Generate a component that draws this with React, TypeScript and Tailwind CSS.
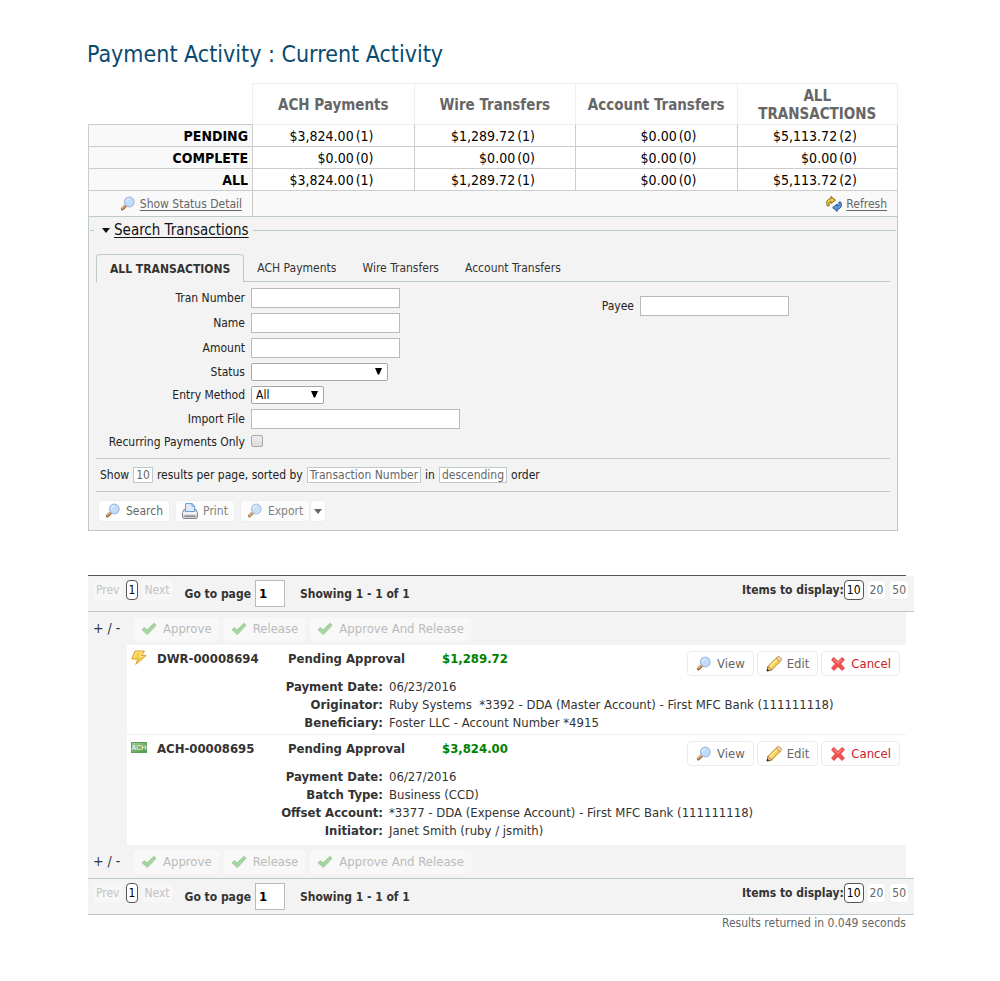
import { useState, type ReactNode } from "react";

interface SummaryRow {
  label: string;
  cells: [string, string][];
}

interface Payment {
  id: string;
  type: "wire" | "ach";
  status: string;
  amount: string;
  details: [string, string][];
}

const columns = ["ACH Payments", "Wire Transfers", "Account Transfers", "ALL TRANSACTIONS"];

const summary: SummaryRow[] = [
  { label: "PENDING", cells: [["$3,824.00", "(1)"], ["$1,289.72", "(1)"], ["$0.00", "(0)"], ["$5,113.72", "(2)"]] },
  { label: "COMPLETE", cells: [["$0.00", "(0)"], ["$0.00", "(0)"], ["$0.00", "(0)"], ["$0.00", "(0)"]] },
  { label: "ALL", cells: [["$3,824.00", "(1)"], ["$1,289.72", "(1)"], ["$0.00", "(0)"], ["$5,113.72", "(2)"]] },
];

const payments: Payment[] = [
  {
    id: "DWR-00008694",
    type: "wire",
    status: "Pending Approval",
    amount: "$1,289.72",
    details: [
      ["Payment Date:", "06/23/2016"],
      ["Originator:", "Ruby Systems \u00a0*3392 - DDA (Master Account) - First MFC Bank (111111118)"],
      ["Beneficiary:", "Foster LLC - Account Number *4915"],
    ],
  },
  {
    id: "ACH-00008695",
    type: "ach",
    status: "Pending Approval",
    amount: "$3,824.00",
    details: [
      ["Payment Date:", "06/27/2016"],
      ["Batch Type:", "Business (CCD)"],
      ["Offset Account:", "*3377 - DDA (Expense Account) - First MFC Bank (111111118)"],
      ["Initiator:", "Janet Smith (ruby / jsmith)"],
    ],
  },
];

const tabs = ["ALL TRANSACTIONS", "ACH Payments", "Wire Transfers", "Account Transfers"];

/* ---------- icons ---------- */

function SearchIcon() {
  return (
    <svg width="16" height="16" viewBox="0 0 16 16" className="shrink-0" aria-hidden="true">
      <path d="M2.4 12.9 5.6 9.8" stroke="#94683c" strokeWidth="3" strokeLinecap="round" />
      <path d="M2.4 12.3 5.4 9.5" stroke="#e9b06a" strokeWidth="1.5" strokeLinecap="round" />
      <circle cx="9.3" cy="6" r="4.8" fill="#bfdcfa" stroke="#a3b9e4" strokeWidth="1.2" />
      <path d="M6.3 5.8a3 3 0 0 1 3.4-2.8" stroke="#e3f0ff" strokeWidth="1.3" fill="none" />
    </svg>
  );
}

function RefreshIcon() {
  return (
    <svg width="16" height="16" viewBox="0 0 16 16" className="shrink-0" aria-hidden="true">
      <path d="M1.4 10C-.4 6.400 1 2.900 4.900 2.600V.5l4.500 3.600-4.500 3.500V5.500C3.200 5.700 2.500 7.300 3.300 9.700z" fill="#f0cf3c" stroke="#75590f" strokeWidth=".9" />
      <path d="M14.600 6c1.800 3.600.4 6.900-3.400 7.200v2.200l-4.500-3.800 4.500-3.600v2.100c1.800-.1 2.400-1.600 1.600-3.900z" fill="#5d9be0" stroke="#153f7c" strokeWidth=".9" />
    </svg>
  );
}

function PrintIcon() {
  return (
    <svg width="16" height="16" viewBox="0 0 16 16" className="shrink-0" aria-hidden="true">
      <path d="M2 6.5h12l1.5 3.5v4l-1 1.5h-13l-1-1.5v-4z" fill="#c9cbd0" stroke="#686b71" />
      <path d="M3.5 8.5V.6h6.7l2.3 2.3v5.6z" fill="#dcebfc" stroke="#4f86c9" />
      <path d="M10 .8v2.4h2.4" fill="none" stroke="#4f86c9" />
      <path d="M1 9h14v2.5H1z" fill="#f4f4f6" />
      <path d="M2.5 12.5h11v1.3h-11z" fill="#63656a" />
    </svg>
  );
}

function CheckIcon() {
  return (
    <svg width="16" height="16" viewBox="0 0 16 16" className="shrink-0" aria-hidden="true">
      <path d="M1 8.8 3.3 6.6 6 8.9 12.9 2.3 15.1 4.2 6.4 13.6z" fill="#a5d6a1" stroke="#94c991" strokeWidth=".8" />
    </svg>
  );
}

function PencilIcon() {
  return (
    <svg width="16" height="16" viewBox="0 0 16 16" className="shrink-0" aria-hidden="true">
      <path d="M1 15 1.9 10.4 10.3 2 14 5.7 5.6 14.1z" fill="#f6d04e" stroke="#b5822b" strokeWidth=".9" />
      <path d="M3.6 11 11.2 3.5" stroke="#fdf0a4" strokeWidth="1.6" />
      <path d="M10.3 2 11.7.8c1.4-1 4.5 2 3.5 3.5L14 5.7z" fill="#f3dcc0" stroke="#b5822b" strokeWidth=".9" />
      <path d="M1 15 1.9 10.4 5.6 14.1z" fill="#f3cfa0" stroke="#8a5a20" strokeWidth=".7" />
      <path d="M.8 15.2 1.4 12.7l2 1.9z" fill="#222" />
    </svg>
  );
}

function CancelIcon() {
  return (
    <svg width="16" height="16" viewBox="0 0 16 16" className="shrink-0" aria-hidden="true">
      <path
        d="M1.6 3.7 3.9 1.5 8 5.5 12.1 1.5 14.4 3.7 10.6 7.9 14.4 12.1 12.1 14.4 8 10.4 3.9 14.4 1.6 12.1 5.4 7.9z"
        fill="#f4534f"
        stroke="#dd3a3d"
        strokeWidth=".9"
      />
      <path d="M3.9 3.3 8 7.2l4.1-3.9" fill="none" stroke="#fa8a80" strokeWidth="1.1" />
    </svg>
  );
}

function WireIcon() {
  return (
    <svg width="16" height="16" viewBox="0 0 16 16" className="shrink-0" aria-hidden="true">
      <path d="M4 1h9.5L10.6 5.5h4.6L4.7 14.4 7 9H.8z" fill="#f7cf45" stroke="#dd9f33" />
      <path d="M3 8 5 2.3h6.2L8.6 6.6h3" fill="none" stroke="#fdeb9a" />
    </svg>
  );
}

function AchIcon() {
  return (
    <svg width="16" height="16" viewBox="0 0 16 16" className="shrink-0" aria-hidden="true">
      <defs>
        <linearGradient id="ach-fill" x1="0" y1="0" x2="1" y2="1">
          <stop offset="0" stopColor="#a0cf97" />
          <stop offset="1" stopColor="#4d9447" />
        </linearGradient>
      </defs>
      <rect x=".5" y="2.5" width="15" height="10" fill="url(#ach-fill)" stroke="#5f9f5a" />
      <text x="8" y="10" textAnchor="middle" fontSize="7" fill="#fff" fontFamily="Liberation Sans, sans-serif" fontWeight="400">
        ACH
      </text>
    </svg>
  );
}

function Caret() {
  return (
    <svg width="8" height="5" viewBox="0 0 8 5" className="shrink-0" aria-hidden="true">
      <path d="M0 0h8L4 5z" fill="currentColor" />
    </svg>
  );
}

/* ---------- summary ---------- */

function SummaryTable() {
  return (
    <table className="w-full table-fixed border-separate border-spacing-0 text-[14px] leading-[18px]">
      <colgroup>
        <col className="w-[164px]" />
        <col />
        <col />
        <col />
        <col />
      </colgroup>
      <thead>
        <tr>
          <td />
          {columns.map((name) => (
            <th
              key={name}
              scope="col"
              className="h-[41px] border-t border-l border-[#eee] px-2 pt-0.5 pb-0 text-[15px] font-bold text-[#666] last:border-r"
            >
              {name}
            </th>
          ))}
        </tr>
      </thead>
      <tbody>
        {summary.map((row, i) => (
          <tr key={row.label}>
            <th
              scope="row"
              className="h-[22px] border-t border-l border-[#ccc] bg-[#f9f9f9] py-0 pr-1 text-right font-bold text-black"
            >
              {row.label}
            </th>
            {row.cells.map(([amount, count], j) => (
              <td
                key={j}
                className={`border-t border-l border-[#ccc] py-0 pr-10 text-right text-black last:border-r ${i === 0 ? "border-t-[#eee]" : ""}`}
              >
                {amount}
                <span className="ml-0.5">{count}</span>
              </td>
            ))}
          </tr>
        ))}
        <tr className="text-[12px] text-[#666]">
          <td className="h-[26px] border-t border-l border-[#ccc] bg-[#f9f9f9] py-0 pr-2.5">
            <a href="#detail" className="flex items-center justify-end gap-1 underline underline-offset-2">
              <SearchIcon />
              Show Status Detail
            </a>
          </td>
          <td colSpan={4} className="border-x border-t border-[#ccc] bg-[#f9f9f9] py-0 pr-2.5">
            <a href="#refresh" className="flex items-center justify-end gap-1 underline underline-offset-2">
              <RefreshIcon />
              Refresh
            </a>
          </td>
        </tr>
      </tbody>
    </table>
  );
}

/* ---------- search form ---------- */

function Field({ id, label, labelWidth, children }: { id: string; label: string; labelWidth: string; children: ReactNode }) {
  return (
    <div className="flex items-center gap-1.5">
      <label htmlFor={id} className={`${labelWidth} text-right`}>
        {label}
      </label>
      {children}
    </div>
  );
}

function SelectBox({ id, width, options }: { id: string; width: string; options: string[] }) {
  return (
    <div className="relative">
      <select
        id={id}
        className={`${width} block h-[18px] appearance-none rounded-xs border border-[#a5a5a5] bg-white pl-1 text-[12px] leading-4 text-black`}
      >
        {options.map((o) => (
          <option key={o}>{o}</option>
        ))}
      </select>
      <svg width="7" height="7" viewBox="0 0 7 7" className="pointer-events-none absolute top-[5px] right-1.5 text-black" aria-hidden="true">
        <path d="M0 0h7L4.200 6.500H2.800z" fill="currentColor" />
      </svg>
    </div>
  );
}

const textBox = "h-5 border border-[#b9b9b9] bg-white px-1 text-[12px] text-black";
const formButton = "flex h-[22px] items-center gap-[5px] rounded border border-[#efefef] bg-white px-1.5 text-[#666]";
const choice = "mx-1 border border-[#bccaca] bg-white px-0.5 leading-[14px] text-[#666]";

function SearchForm() {
  const [activeTab, setActiveTab] = useState(tabs[0]);
  return (
    <form
      className="border border-[#bccaca] bg-[#f3f3f3] text-[12px] leading-4 text-[#222]"
      onSubmit={(e) => e.preventDefault()}
    >
      <fieldset className="mx-px mt-1 border-t border-[#bccaca] pb-2">
        <legend className="ml-1 flex items-center gap-1 pr-1 pl-2 text-[15px] leading-[18px] text-[#111]">
          <Caret />
          <a href="#search" className="underline underline-offset-2">
            Search Transactions
          </a>
        </legend>
        <div className="px-1.5 pt-[14px]">
          <div role="tablist" className="flex items-end border-b border-[#bccaca]">
            {tabs.map((tab) => (
              <button
                key={tab}
                type="button"
                role="tab"
                aria-selected={tab === activeTab}
                onClick={() => setActiveTab(tab)}
                className={
                  tab === activeTab
                    ? "-mb-px h-7 rounded-t border border-b-0 border-[#bccaca] bg-[#f3f3f3] px-[13px] font-bold text-[#333]"
                    : "h-7 px-[13px] pt-0.5 text-[#333]"
                }
              >
                {tab}
              </button>
            ))}
          </div>

          <div className="grid grid-cols-2 pt-1.5 pb-2">
            <div className="flex flex-col gap-[5px]">
              <Field id="tran" label="Tran Number" labelWidth="w-[149px]">
                <input id="tran" type="text" className={`${textBox} w-[149px]`} />
              </Field>
              <Field id="name" label="Name" labelWidth="w-[149px]">
                <input id="name" type="text" className={`${textBox} w-[149px]`} />
              </Field>
              <Field id="amount" label="Amount" labelWidth="w-[149px]">
                <input id="amount" type="text" className={`${textBox} w-[149px]`} />
              </Field>
              <Field id="status" label="Status" labelWidth="w-[149px]">
                <SelectBox id="status" width="w-[137px]" options={[""]} />
              </Field>
              <Field id="entry" label="Entry Method" labelWidth="w-[149px]">
                <SelectBox id="entry" width="w-[73px]" options={["All"]} />
              </Field>
              <Field id="import" label="Import File" labelWidth="w-[149px]">
                <input id="import" type="text" className={`${textBox} w-[209px]`} />
              </Field>
              <Field id="recurring" label="Recurring Payments Only" labelWidth="w-[149px]">
                <input
                  id="recurring"
                  type="checkbox"
                  className="mb-0.5 size-3 appearance-none rounded-xs border border-[#aaa] bg-linear-to-b from-[#eee] to-[#dcdcdc] checked:bg-[#888]"
                />
              </Field>
            </div>
            <div className="pt-2">
              <Field id="payee" label="Payee" labelWidth="w-[141px]">
                <input id="payee" type="text" className={`${textBox} w-[149px]`} />
              </Field>
            </div>
          </div>

          <p className="border-y border-[#bccaca] px-1 py-2">
            Show
            <button type="button" className={choice}>10</button>
            results per page, sorted by
            <button type="button" className={choice}>Transaction Number</button>
            in
            <button type="button" className={choice}>descending</button>
            order
          </p>

          <div className="flex gap-[5px] px-0.5 pt-2">
            <button type="submit" className={formButton}>
              <SearchIcon />
              Search
            </button>
            <button type="button" className={`${formButton} opacity-80`}>
              <PrintIcon />
              Print
            </button>
            <div className="flex">
              <button type="button" className={`${formButton} opacity-80`}>
                <SearchIcon />
                Export
              </button>
              <button type="button" aria-label="Export options" className="flex h-[22px] items-center rounded border border-[#efefef] bg-white px-[3px] text-[#666]">
                <Caret />
              </button>
            </div>
          </div>
        </div>
      </fieldset>
    </form>
  );
}

/* ---------- results ---------- */

function Pager({ id }: { id: string }) {
  const pill = "h-5 rounded border";
  return (
    <nav className="flex h-9 items-start justify-between border-b border-[#bccaca] bg-[#f3f3f3] px-[5px] pt-1 text-[12px] leading-[18px] text-[#333]">
      <div className="flex items-start">
        <div className="flex gap-[3px]">
          <button type="button" disabled className={`${pill} border-[#f6f6f6] bg-[#f7f7f7] px-0.5 text-[#c4c4c4]`}>Prev</button>
          <button type="button" className={`${pill} border-[#555] bg-white px-0.5 text-black`}>1</button>
          <button type="button" disabled className={`${pill} border-[#f6f6f6] bg-[#f7f7f7] px-0.5 text-[#c4c4c4]`}>Next</button>
        </div>
        <div className="ml-3 flex items-center gap-1 font-bold">
          <label htmlFor={id}>Go to page</label>
          <input id={id} type="text" defaultValue="1" className="h-[27px] w-[30px] border border-[#b9b9b9] bg-white px-[3px] text-[13px] text-black" />
          <span className="ml-[11px]">Showing 1 - 1 of 1</span>
        </div>
      </div>
      <div className="flex gap-[3px]">
        <span className="-mr-[3px] leading-5 font-bold">Items to display:</span>
        <button type="button" className={`${pill} border-[#555] bg-white px-0.5 text-black`}>10</button>
        <button type="button" className={`${pill} border-[#f0f0f0] bg-white px-0.5 text-[#666]`}>20</button>
        <button type="button" className={`${pill} border-[#f0f0f0] bg-white px-0.5 text-[#666]`}>50</button>
      </div>
    </nav>
  );
}

function BulkActions() {
  return (
    <div className="mr-2 flex h-[33px] items-center bg-[#f3f3f3] pl-[5px] text-[#333]">
      <span className="w-10 text-[14px]">+ / -</span>
      <div className="flex gap-[3px] text-[13px]">
        {["Approve", "Release", "Approve And Release"].map((label) => (
          <button
            key={label}
            type="button"
            disabled
            className="flex h-6 items-center gap-1.5 rounded border border-[#f5f5f5] bg-[#f8f8f8] px-[7px] text-[#bbb]"
          >
            <CheckIcon />
            {label}
          </button>
        ))}
      </div>
    </div>
  );
}

const rowButton = "flex h-[25px] items-center gap-[5px] rounded border border-[#ececec] bg-white px-2";

function PaymentRow({ payment }: { payment: Payment }) {
  return (
    <li className="border-b border-[#f0f0f0] bg-white pb-0.5 text-[13px] leading-[18px] text-[#333] last:border-b-0 last:pb-[5px]">
      <div className="flex h-[33px] items-start pt-[5px] pr-1.5 pl-1 font-bold">
        {payment.type === "wire" ? <WireIcon /> : <AchIcon />}
        <span className="ml-2.5 w-[131px]">{payment.id}</span>
        <span className="w-[154px]">{payment.status}</span>
        <span className="text-[#008000]">{payment.amount}</span>
        <div className="ml-auto flex gap-[3px] pt-px font-normal">
          <button type="button" className={`${rowButton} text-[#666]`}>
            <SearchIcon />
            View
          </button>
          <button type="button" className={`${rowButton} text-[#666]`}>
            <PencilIcon />
            Edit
          </button>
          <button type="button" className={`${rowButton} text-[#c8202c]`}>
            <CancelIcon />
            Cancel
          </button>
        </div>
      </div>
      <dl>
        {payment.details.map(([term, value]) => (
          <div key={term} className="flex gap-1.5">
            <dt className="w-64 text-right font-bold">{term}</dt>
            <dd>{value}</dd>
          </div>
        ))}
      </dl>
    </li>
  );
}

function Results() {
  return (
    <section className="mt-11">
      <div className="mr-2 border-t border-[#555]" />
      <Pager id="page-top" />
      <BulkActions />
      <ul className="mr-2 bg-[#f3f3f3] pl-[39px]">
        {payments.map((p) => (
          <PaymentRow key={p.id} payment={p} />
        ))}
      </ul>
      <BulkActions />
      <div className="border-t border-[#bccaca]">
        <Pager id="page-bottom" />
      </div>
      <p className="mr-2 text-right text-[12px] leading-4 text-[#666]">Results returned in 0.049 seconds</p>
    </section>
  );
}

export default function App() {
  return (
    <main className="min-h-screen bg-white pt-[38px] pr-[86px] pb-12 pl-[87px] font-['DejaVu_Sans_Condensed','DejaVu_Sans',sans-serif]">
      <h1 className="text-[23px] leading-[32px] text-[#0b4a6f]">Payment Activity : Current Activity</h1>
      <div className="ml-px">
        <div className="mt-[13px] mr-4">
          <SummaryTable />
          <SearchForm />
        </div>
        <Results />
      </div>
    </main>
  );
}
